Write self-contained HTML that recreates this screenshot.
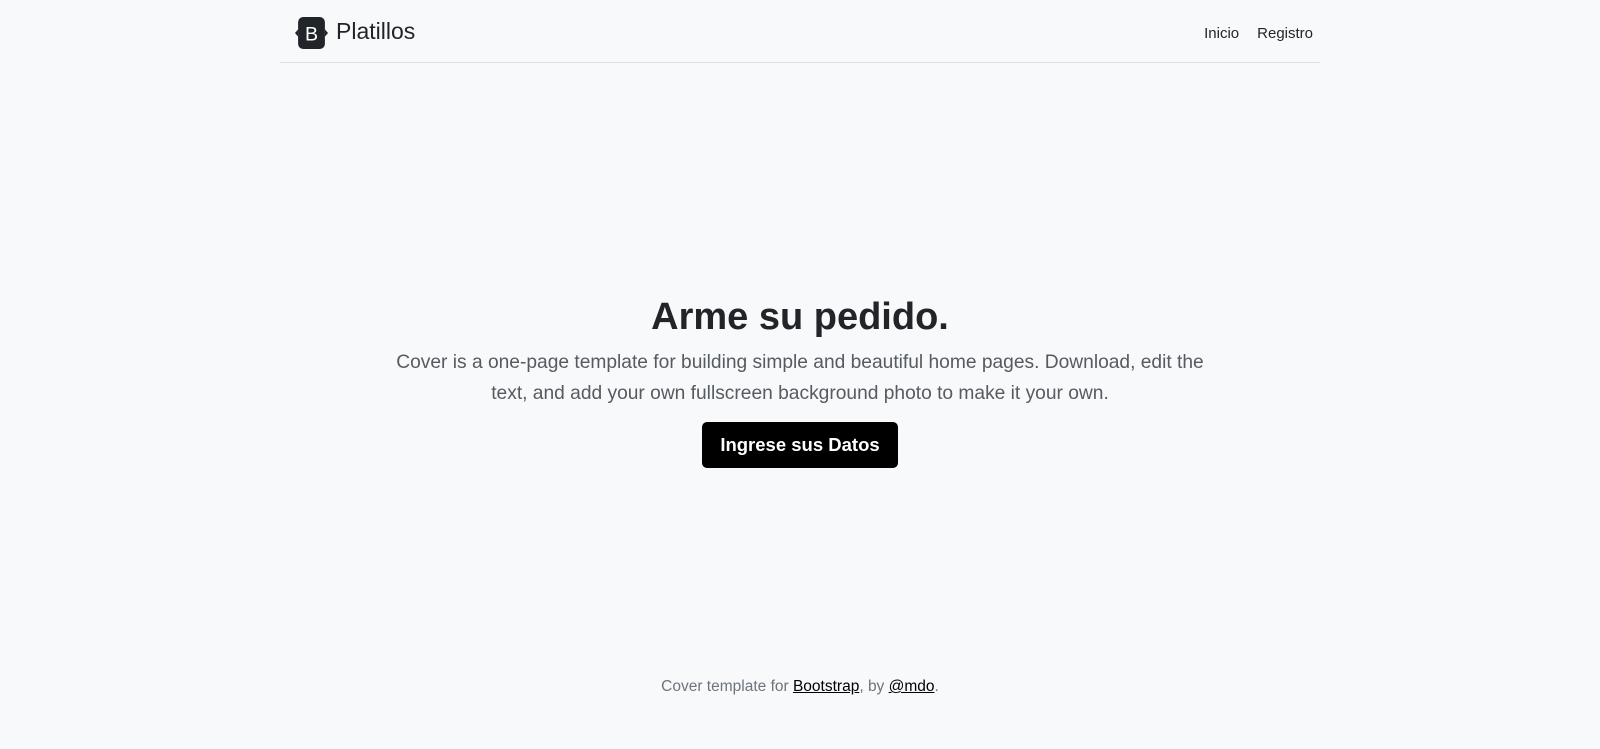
<!DOCTYPE html>
<html><head><meta charset="utf-8"><style>
html,body{margin:0;padding:0;background:#f8f9fa;width:1600px;height:749px;overflow:hidden;font-family:"Liberation Sans",sans-serif;color:#212529}
.hdr{position:absolute;left:280px;width:1040px;top:0;height:62px;border-bottom:1px solid #dee2e6}
.logo{position:absolute;left:15px;top:17px;width:33px;height:32px}
.brand{position:absolute;left:56px;top:18px;font-size:23px;color:#212529}
.nav{position:absolute;right:7px;top:25px;font-size:15px;color:#212529}
.nav span{margin-left:18px}
h1{position:absolute;left:0;width:1600px;top:296px;margin:0;text-align:center;font-size:38px;font-weight:bold;color:#212529}
p.lead{position:absolute;left:0;width:1600px;top:347px;margin:0;text-align:center;font-size:19.2px;line-height:31px;color:#555b61;font-weight:300;white-space:nowrap}
.btn{position:absolute;left:702px;top:422px;width:196px;height:46px;background:#000;border-radius:5px;color:#fff;font-weight:bold;font-size:18.5px;line-height:46px;text-align:center}
.ft{position:absolute;left:0;width:1600px;top:678px;text-align:center;font-size:15.5px;color:#6c757d}
.ft a{color:#000;text-decoration:underline}
</style></head><body>
<div class="hdr">
<svg class="logo" viewBox="0 0 32 31"><rect x="3" y="0" width="26" height="31" rx="5" fill="#212529"/><path d="M3 12 L0 15.5 L3 19Z M29 12 L32 15.5 L29 19Z" fill="#212529"/><text x="16" y="23" text-anchor="middle" font-family="Liberation Sans" font-size="19" fill="#fff">B</text></svg>
<div class="brand">Platillos</div>
<div class="nav"><span>Inicio</span><span>Registro</span></div>
</div>
<h1>Arme su pedido.</h1>
<p class="lead">Cover is a one-page template for building simple and beautiful home pages. Download, edit the<br>text, and add your own fullscreen background photo to make it your own.</p>
<div class="btn">Ingrese sus Datos</div>
<div class="ft">Cover template for <a>Bootstrap</a>, by <a>@mdo</a>.</div>
</body></html>
